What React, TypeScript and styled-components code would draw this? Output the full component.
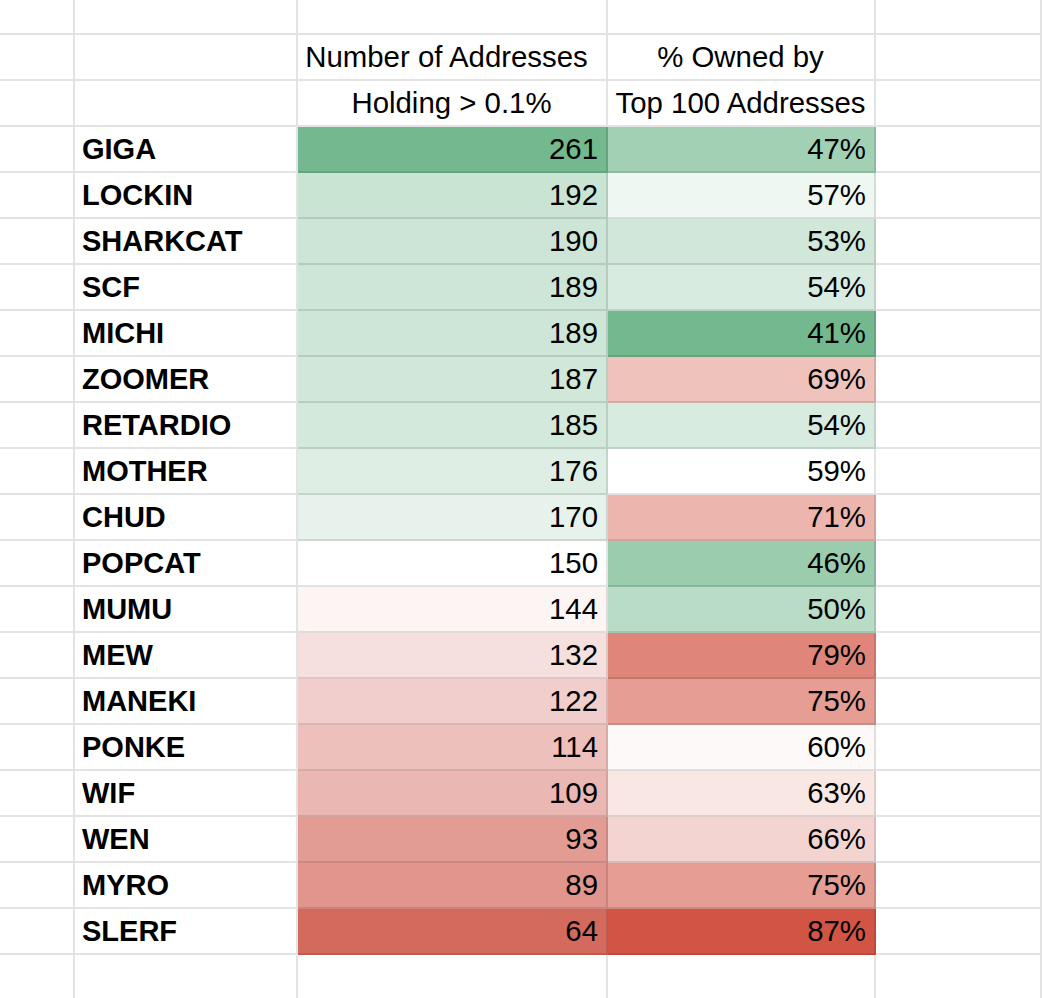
import React from 'react';
import styled, { createGlobalStyle } from 'styled-components';

const GlobalStyle = createGlobalStyle`
  html, body {
    margin: 0;
    padding: 0;
    background: #fff;
    overflow: hidden;
  }
  body {
    font-family: "Liberation Sans", Arial, sans-serif;
    color: #000;
  }
`;

type Rgb = [number, number, number];

const GREEN: Rgb = [115, 184, 142];
const RED_COUNT: Rgb = [212, 105, 94];
const RED_SHARE: Rgb = [210, 84, 68];

// blend from white towards a colour, f in 0..1
const tint = (c: Rgb, f: number) => {
  const k = Math.max(0, Math.min(1, f));
  const [r, g, b] = c.map((v) => Math.round(255 + (v - 255) * k));
  return `rgb(${r}, ${g}, ${b})`;
};

// Number of addresses: white at 150, green up to 261, red down to 64
const countColour = (v: number) =>
  v >= 150 ? tint(GREEN, (v - 150) / (261 - 150)) : tint(RED_COUNT, (150 - v) / (150 - 64));

// % owned: white at 59, green down to 41, red up to 87
const shareColour = (v: number) =>
  v <= 59 ? tint(GREEN, (59 - v) / (59 - 41)) : tint(RED_SHARE, (v - 59) / (87 - 59));

const rows: [string, number, number][] = [
  ['GIGA', 261, 47],
  ['LOCKIN', 192, 57],
  ['SHARKCAT', 190, 53],
  ['SCF', 189, 54],
  ['MICHI', 189, 41],
  ['ZOOMER', 187, 69],
  ['RETARDIO', 185, 54],
  ['MOTHER', 176, 59],
  ['CHUD', 170, 71],
  ['POPCAT', 150, 46],
  ['MUMU', 144, 50],
  ['MEW', 132, 79],
  ['MANEKI', 122, 75],
  ['PONKE', 114, 60],
  ['WIF', 109, 63],
  ['WEN', 93, 66],
  ['MYRO', 89, 75],
  ['SLERF', 64, 87],
];

const Sheet = styled.div`
  display: grid;
  grid-template-columns: 75px 223px 310px 268px 1fr;
  grid-template-rows: 35px;
  grid-auto-rows: 46px;
  width: 100%;
  height: 100vh;
  overflow: hidden;
`;

const Cell = styled.div<{ $align?: 'left' | 'center' | 'right'; $bold?: boolean; $bg?: string }>`
  box-sizing: border-box;
  display: flex;
  align-items: center;
  justify-content: ${(p) =>
    p.$align === 'right' ? 'flex-end' : p.$align === 'center' ? 'center' : 'flex-start'};
  padding: 0 8px 0 7px;
  border-right: 2px solid rgba(0, 0, 0, 0.11);
  border-bottom: 2px solid rgba(0, 0, 0, 0.11);
  background: ${(p) => p.$bg || '#fff'};
  font-size: ${(p) => (p.$bold ? '29px' : '29.4px')};
  font-weight: ${(p) => (p.$bold ? 700 : 400)};
  white-space: nowrap;
  overflow: hidden;
`;

// the first header line sits a little left of centre in the sheet
const HeaderCell = styled(Cell)`
  padding-right: 18px;
`;

const EmptyRow = () => (
  <>
    <Cell />
    <Cell />
    <Cell />
    <Cell />
    <Cell />
  </>
);

export default function App() {
  return (
    <>
      <GlobalStyle />
      <Sheet>
        <EmptyRow />

        <Cell />
        <Cell />
        <HeaderCell $align="center">Number of Addresses</HeaderCell>
        <Cell $align="center">% Owned by</Cell>
        <Cell />

        <Cell />
        <Cell />
        <Cell $align="center">Holding &gt; 0.1%</Cell>
        <Cell $align="center">Top 100 Addresses</Cell>
        <Cell />

        {rows.map(([name, count, share]) => (
          <React.Fragment key={name}>
            <Cell />
            <Cell $bold>{name}</Cell>
            <Cell $align="right" $bg={countColour(count)}>
              {count}
            </Cell>
            <Cell $align="right" $bg={shareColour(share)}>
              {share}%
            </Cell>
            <Cell />
          </React.Fragment>
        ))}

        <EmptyRow />
      </Sheet>
    </>
  );
}
